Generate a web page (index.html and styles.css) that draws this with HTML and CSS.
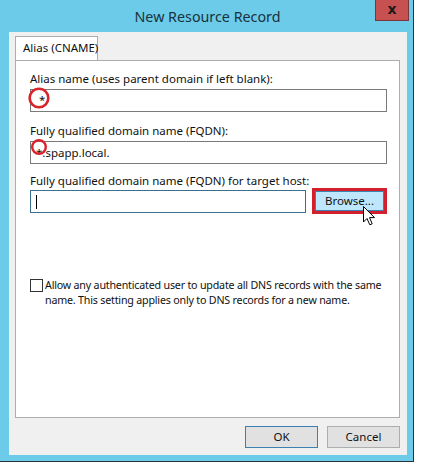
FILE: index.html
```html
<!DOCTYPE html>
<html>
<head>
<meta charset="utf-8">
<link rel="stylesheet" href="styles.css">
</head>
<body>
<div class="window">
  <div class="titlebar">
    <span class="title">New Resource Record</span>
    <div class="close">x</div>
  </div>
  <div class="client">
    <div class="tabs">
      <div class="tab">Alias (CNAME)</div>
    </div>
    <div class="panel">
      <label class="lbl">Alias name (uses parent domain if left blank):</label>
      <div class="input"><span class="val first">*</span></div>
      <label class="lbl l2">Fully qualified domain name (FQDN):</label>
      <div class="input"><span class="val">*.spapp.local.</span></div>
      <label class="lbl l3">Fully qualified domain name (FQDN) for target host:</label>
      <div class="row">
        <div class="input grow"><span class="caret"></span></div>
        <div class="hl"><div class="browse">Browse...</div></div>
      </div>
      <div class="check">
        <span class="box"></span>
        <div class="ctext">
          <div>Allow any authenticated user to update all DNS records with the same</div>
          <div>name. This setting applies only to DNS records for a new name.</div>
        </div>
      </div>
    </div>
    <div class="buttons">
      <div class="btn ok">OK</div>
      <div class="btn">Cancel</div>
    </div>
  </div>
  <svg class="circle c1" width="24" height="24" viewBox="0 0 24 24"><circle cx="12" cy="12" r="9.3" fill="none" stroke="#d9222a" stroke-width="2.6"/></svg>
  <svg class="circle c2" width="18" height="18" viewBox="0 0 18 18"><circle cx="9" cy="9" r="6.8" fill="none" stroke="#d9222a" stroke-width="2.4"/></svg>
  <svg class="cursor" width="16" height="22" viewBox="0 0 16 22"><path d="M1.5 1.5 L1.5 17 L5 13.5 L7.8 19.8 L10.2 18.8 L7.5 12.6 L12.5 12.6 Z" fill="#fff" stroke="#000" stroke-width="1" stroke-linejoin="round"/></svg>
</div>
</body>
</html>
```
FILE: styles.css
```css
html, body {
  margin: 0;
  padding: 0;
  background: #ffffff;
}
body {
  font-family: "Noto Sans", "Open Sans", sans-serif;
  font-size: 11.5px;
  color: #111;
}
.window {
  position: relative;
  width: 413px;
  height: 461px;
  background: #6ccbe9;
  border-right: 1px solid #24343b;
  border-bottom: 1px solid #24343b;
  display: flex;
  flex-direction: column;
}
.titlebar {
  height: 32px;
  display: flex;
  align-items: center;
  justify-content: center;
  flex: none;
}
.title {
  font-size: 14.3px;
  color: #19323d;
  margin-left: 2px;
}
.close {
  position: absolute;
  top: 0;
  right: 4px;
  width: 32px;
  height: 20px;
  background: #c75050;
  border: 1px solid #7a3636;
  border-top: none;
  color: #1a1a1a;
  font-weight: bold;
  font-size: 14px;
  line-height: 18px;
  text-align: center;
  font-family: "DejaVu Sans", sans-serif;
}
.client {
  flex: 1;
  margin: 0 6px 6px 9px;
  background: #f0f0f0;
  padding: 4px 7px 0 6px;
  display: flex;
  flex-direction: column;
}
.tabs {
  height: 24px;
  display: flex;
  position: relative;
  z-index: 1;
}
.tab {
  width: 83px;
  height: 24px;
  background: #fff;
  border: 1px solid #adadad;
  border-bottom: none;
  line-height: 22px;
  padding-left: 7px;
  box-sizing: border-box;
  white-space: nowrap;
}
.panel {
  height: 358px;
  box-sizing: border-box;
  background: #fff;
  border: 1px solid #adadad;
  padding: 10px 12px 0 14px;
  display: flex;
  flex-direction: column;
}
.lbl {
  display: block;
  line-height: 15px;
  height: 15px;
  white-space: nowrap;
}
.l2 { margin-top: 11px; }
.l3 { margin-top: 9px; }
.input {
  height: 23px;
  box-sizing: border-box;
  border: 1px solid #7a7a7a;
  margin-top: 3px;
  display: flex;
  align-items: center;
  padding-left: 5px;
  background: #fff;
}
.val.first {
  padding-left: 3px;
  position: relative;
  top: -1px;
}
.row {
  display: flex;
  align-items: center;
}
.grow {
  width: 276px;
  flex: none;
  border-color: #3c6f8f;
  margin-top: 1px;
}
.caret {
  width: 1px;
  height: 14px;
  background: #000;
}
.hl {
  margin-left: 6px;
  border: 3px solid #d41f2c;
  width: 77px;
  height: 26px;
  box-sizing: border-box;
}
.browse {
  height: 100%;
  box-sizing: border-box;
  border: 1px solid #3c7fb1;
  background: #bee6fd;
  text-align: center;
  line-height: 18px;
}
.check {
  display: flex;
  align-items: flex-start;
  margin-top: 64px;
}
.box {
  width: 13px;
  height: 13px;
  box-sizing: border-box;
  border: 1px solid #333;
  background: #fff;
  flex: none;
  margin-top: 1px;
}
.ctext {
  margin-left: 2px;
  line-height: 15px;
  white-space: nowrap;
  font-size: 10.7px;
  letter-spacing: -0.2px;
}
.buttons {
  display: flex;
  justify-content: flex-end;
  gap: 9px;
  margin-top: 8px;
}
.btn {
  width: 73px;
  height: 22px;
  box-sizing: border-box;
  border: 1px solid #adadad;
  background: #e1e1e1;
  text-align: center;
  line-height: 20px;
}
.btn.ok {
  border-color: #3c7fb1;
}
.circle {
  position: absolute;
}
.c1 { left: 27px; top: 86px; }
.c2 { left: 30px; top: 138px; }
.cursor {
  position: absolute;
  left: 362px;
  top: 205px;
}
```
